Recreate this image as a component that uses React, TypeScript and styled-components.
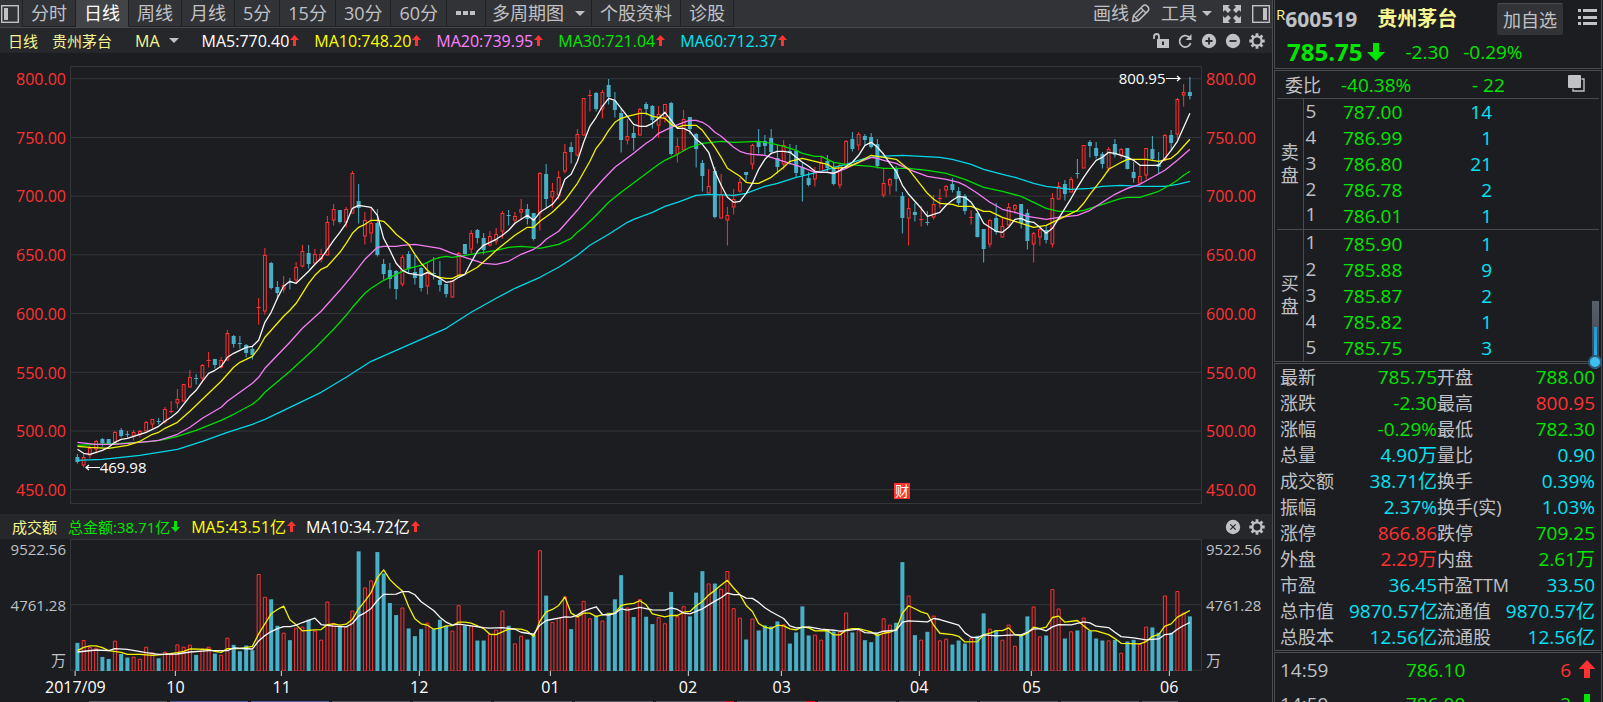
import React from "react";
import styled, { createGlobalStyle, css } from "styled-components";

const c = {
  bg: "#1c1d21",
  bar: "#26272b",
  line: "#35363a",
  frame: "#4a4b4f",
  text: "#c0c1c5",
  red: "#ff3232",
  green: "#00e600",
  cyan: "#00e5f5",
  yellow: "#ffff00",
  cream: "#f6f690",
  pink: "#ff80ff",
  teal: "#48b0c6",
};

const GlobalStyle = createGlobalStyle`
  * { box-sizing: border-box; }
  body { margin: 0; background: ${c.bg}; }
  button { font: inherit; color: inherit; background: none; border: 0; padding: 0; margin: 0; cursor: pointer; }
  table { border-collapse: collapse; }
  th, td { padding: 0; font-weight: 400; }
`;

/* ---------- market data ---------- */

// Per day: rising flag, body top, body bottom, high, low (price plot rows), turnover bar top (turnover plot rows)
type Day = [number, number, number, number, number, number];
const days: Day[] = [
  [0, 457, 462, 454, 463, 427], [1, 457, 465, 453, 467, 419], [1, 448, 455, 446, 458, 440], [1, 441, 449, 440, 453, 442],
  [0, 439, 443, 438, 446, 469], [0, 439, 444, 439, 444, 475], [1, 432, 442, 431, 443, 421], [0, 430, 436, 428, 437, 460],
  [0, 434, 435, 431, 437, 471], [1, 432, 436, 430, 440, 469], [1, 431, 434, 430, 437, 475], [1, 422, 431, 421, 431, 439],
  [1, 419, 424, 419, 428, 456], [0, 421, 422, 418, 424, 473], [1, 409, 422, 407, 423, 454], [1, 411, 411, 401, 413, 462],
  [1, 399, 403, 389, 408, 432], [1, 384, 401, 384, 401, 439], [1, 377, 387, 370, 387, 433], [0, 378, 379, 374, 384, 463],
  [1, 365, 378, 364, 382, 445], [1, 360, 360, 352, 367, 439], [0, 359, 365, 359, 368, 459], [1, 360, 367, 357, 368, 463],
  [1, 333, 360, 330, 360, 412], [0, 336, 344, 335, 347, 433], [0, 343, 344, 336, 348, 452], [0, 345, 353, 344, 357, 435],
  [0, 349, 355, 346, 359, 449], [1, 307, 307, 298, 324, 222], [1, 255, 311, 248, 314, 290], [0, 263, 288, 262, 289, 297],
  [0, 287, 293, 281, 299, 376], [1, 285, 289, 276, 292, 397], [0, 282, 283, 278, 289, 419], [1, 267, 280, 262, 283, 382],
  [1, 251, 266, 245, 267, 379], [0, 253, 264, 245, 268, 358], [1, 254, 263, 249, 265, 391], [1, 254, 259, 249, 262, 418],
  [1, 222, 255, 216, 255, 304], [1, 209, 220, 204, 225, 368], [0, 210, 222, 210, 223, 379], [1, 209, 222, 207, 227, 378],
  [1, 173, 213, 171, 213, 331], [0, 201, 208, 184, 223, 154], [1, 220, 236, 212, 244, 262], [1, 223, 233, 207, 242, 241],
  [0, 223, 255, 209, 256, 156], [0, 264, 274, 259, 279, 220], [0, 270, 279, 263, 288, 308], [0, 271, 289, 270, 299, 344],
  [1, 257, 284, 255, 286, 322], [0, 254, 269, 251, 273, 384], [0, 272, 278, 255, 284, 407], [0, 268, 288, 267, 291, 386],
  [1, 273, 286, 262, 294, 367], [0, 273, 274, 257, 279, 386], [0, 280, 285, 261, 291, 358], [0, 284, 294, 284, 297, 376],
  [1, 280, 297, 280, 297, 391], [1, 253, 275, 252, 275, 315], [0, 244, 254, 244, 254, 376], [1, 233, 249, 230, 253, 375],
  [0, 230, 238, 229, 243, 420], [0, 238, 250, 233, 254, 420], [1, 236, 245, 231, 246, 401], [1, 234, 241, 228, 244, 388],
  [1, 213, 231, 211, 238, 331], [0, 215, 216, 210, 225, 376], [1, 216, 220, 212, 224, 429], [1, 209, 212, 199, 219, 406],
  [0, 209, 219, 204, 224, 417], [0, 213, 239, 213, 240, 403], [1, 173, 213, 172, 230, 151], [0, 174, 199, 164, 207, 286],
  [1, 191, 197, 183, 207, 365], [1, 177, 195, 171, 199, 352], [1, 152, 171, 144, 173, 289], [0, 147, 152, 142, 163, 386],
  [1, 134, 155, 129, 156, 348], [1, 98, 135, 98, 135, 302], [1, 95, 95, 90, 111, 354], [0, 93, 109, 92, 111, 346],
  [1, 92, 109, 90, 118, 361], [0, 85, 97, 79, 104, 337], [0, 101, 110, 92, 117, 297], [0, 113, 140, 108, 152, 225],
  [1, 136, 140, 119, 144, 322], [0, 133, 138, 126, 150, 350], [1, 109, 135, 108, 135, 297], [0, 104, 109, 102, 115, 349],
  [0, 106, 120, 105, 128, 371], [1, 114, 125, 106, 137, 351], [1, 104, 117, 104, 122, 369], [0, 103, 154, 102, 155, 275],
  [1, 146, 154, 138, 162, 348], [1, 119, 150, 110, 151, 318], [0, 117, 129, 117, 134, 348], [0, 134, 149, 133, 167, 277],
  [0, 163, 176, 160, 191, 213], [1, 186, 193, 169, 193, 250], [0, 171, 217, 167, 218, 250], [1, 194, 218, 174, 218, 266],
  [1, 215, 220, 207, 245, 213], [1, 199, 207, 189, 214, 324], [1, 182, 191, 178, 192, 352], [0, 172, 175, 172, 181, 417],
  [1, 145, 164, 144, 169, 355], [0, 141, 147, 129, 153, 390], [0, 141, 146, 135, 155, 375], [0, 138, 152, 129, 154, 378],
  [0, 158, 167, 145, 173, 363], [1, 145, 164, 140, 169, 372], [0, 151, 153, 144, 164, 429], [0, 151, 173, 145, 177, 396],
  [0, 167, 175, 163, 201, 318], [0, 178, 185, 172, 186, 405], [1, 171, 179, 167, 186, 403], [1, 163, 172, 157, 172, 418],
  [0, 161, 168, 155, 171, 388], [0, 168, 184, 163, 185, 393], [1, 165, 185, 163, 188, 394], [1, 141, 165, 140, 165, 337],
  [0, 139, 149, 132, 151, 396], [1, 134, 145, 132, 150, 390], [0, 136, 140, 134, 145, 419], [0, 137, 147, 133, 148, 425],
  [0, 144, 166, 139, 168, 400], [1, 183, 195, 168, 197, 354], [1, 179, 185, 178, 194, 373], [0, 169, 179, 166, 191, 367],
  [0, 196, 218, 192, 233, 186], [1, 208, 218, 198, 245, 286], [0, 212, 215, 203, 221, 404], [1, 219, 219, 206, 226, 418],
  [0, 222, 223, 211, 225, 394], [1, 204, 217, 195, 219, 346], [1, 198, 198, 189, 208, 420], [1, 186, 190, 185, 197, 415],
  [0, 184, 190, 178, 192, 432], [0, 191, 203, 187, 205, 420], [0, 196, 211, 194, 214, 429], [1, 217, 217, 210, 224, 414],
  [0, 213, 237, 213, 237, 406], [0, 229, 249, 229, 262, 339], [1, 220, 244, 219, 247, 385], [0, 218, 232, 203, 234, 389],
  [1, 226, 237, 218, 237, 418], [1, 207, 225, 203, 225, 373], [1, 205, 209, 204, 213, 436], [0, 204, 223, 204, 228, 402],
  [0, 213, 241, 209, 249, 348], [1, 233, 244, 232, 262, 319], [1, 229, 237, 227, 245, 408], [0, 230, 240, 225, 243, 405],
  [1, 198, 244, 193, 247, 267], [1, 186, 199, 182, 199, 325], [0, 184, 194, 180, 200, 414], [1, 179, 192, 177, 192, 393],
  [0, 173, 174, 159, 178, 390], [1, 145, 168, 145, 168, 352], [0, 142, 146, 140, 157, 391], [0, 148, 156, 142, 158, 414],
  [0, 154, 164, 152, 168, 420], [1, 149, 168, 147, 171, 420], [0, 144, 155, 139, 157, 418], [1, 149, 155, 148, 158, 457],
  [0, 148, 169, 148, 169, 423], [0, 172, 178, 162, 182, 418], [1, 176, 183, 166, 183, 430], [1, 148, 175, 148, 179, 379],
  [0, 149, 159, 136, 160, 381], [0, 164, 167, 152, 173, 397], [1, 135, 159, 134, 161, 286], [0, 135, 143, 130, 150, 397],
  [1, 99, 134, 98, 139, 273], [1, 92, 95, 84, 106, 337], [0, 92, 96, 77, 99, 348],
];

// Moving averages as "day,row" pairs
const ma5 =
  "0,449 1,453 2,454 3,452 4,450 5,447 6,442 7,439 8,438 9,436 10,434 11,432 12,429 13,426 14,421 15,417 16,412 17,404 18,396 19,390 20,381 21,373 22,370 23,366 24,357 25,353 26,350 27,347 28,346 29,340 30,322 31,312 32,298 33,286 34,281 35,283 36,277 37,271 38,264 39,258 40,249 41,240 42,232 43,223 44,208 45,205 46,206 47,207 48,215 49,238 50,250 51,263 52,270 53,273 54,274 55,275 56,272 57,275 58,278 59,282 60,281 61,277 62,274 63,262 64,251 65,245 66,242 67,239 68,235 69,230 70,223 71,219 72,215 73,220 74,212 75,208 76,204 77,196 78,179 79,174 80,161 81,142 82,126 83,117 84,106 85,98 86,100 87,108 88,116 89,124 90,126 91,126 92,123 93,118 94,112 95,120 96,128 97,128 98,131 99,139 100,144 101,152 102,171 103,185 104,197 105,202 106,201 107,193 108,183 109,169 110,159 111,153 112,151 113,151 114,152 115,157 116,162 117,166 118,171 119,172 120,172 121,173 122,170 123,166 124,162 125,155 126,145 127,142 128,147 129,154 130,163 131,171 132,185 133,194 134,201 135,208 136,216 137,214 138,212 139,205 140,200 141,196 142,197 143,202 144,211 145,223 146,227 147,231 148,232 149,227 150,219 151,218 152,221 153,222 154,227 155,233 156,228 157,218 158,208 159,198 160,187 161,177 162,168 163,160 164,157 165,152 166,153 167,155 168,157 169,160 170,165 171,165 172,165 173,165 174,158 175,150 176,141 177,127 178,113";
const ma10 =
  "0,446 2,447 5,448 8,445 10,441 12,434 13,432 14,428 16,422 18,411 20,399 21,393 23,381 24,374 25,367 26,362 28,356 29,348 30,337 32,323 33,316 34,310 35,303 37,283 38,275 39,269 40,266 42,252 43,243 44,233 45,227 46,224 47,220 48,220 49,221 50,227 51,234 52,239 53,244 54,254 55,263 56,270 57,275 58,277 59,278 60,278 61,275 62,274 64,267 66,256 67,250 68,245 69,240 70,235 71,231 72,227 73,227 74,221 76,212 78,200 80,183 81,172 82,161 83,148 84,140 85,130 86,122 87,118 88,116 90,113 91,113 92,116 94,118 95,124 96,127 97,125 99,125 100,130 102,147 103,157 104,168 106,176 107,182 108,183 109,183 111,177 113,167 114,161 116,158 118,161 120,164 121,168 123,167 125,162 127,155 129,157 131,159 133,169 135,185 136,193 137,199 138,203 140,204 141,206 143,206 145,211 146,211 148,217 150,221 152,225 153,227 155,225 157,219 160,210 161,203 162,194 164,178 165,169 167,162 168,159 171,159 173,161 175,158 176,153 178,139";
const ma20 =
  "0,442 3,444 6,444 10,442 13,440 16,434 18,427 20,418 23,407 24,401 26,392 28,383 29,377 30,368 32,355 34,342 36,328 39,311 42,290 44,275 46,259 48,247 49,246 51,246 52,245 54,244 56,246 58,248 60,253 62,257 64,261 65,263 67,264 69,261 71,254 73,249 74,245 75,239 76,235 77,231 79,217 80,210 82,194 84,180 86,167 89,153 91,143 92,139 93,133 95,127 97,122 98,120 99,120 100,122 101,126 102,132 103,136 105,147 106,151 107,153 108,154 110,155 112,159 114,163 115,165 116,167 118,172 120,172 121,173 123,168 125,162 127,157 128,158 129,160 131,163 133,169 136,176 139,179 141,182 142,185 144,193 146,202 148,209 150,212 152,216 155,219 157,217 160,215 162,210 164,202 166,194 168,188 170,184 172,177 174,170 176,160 178,149";
const ma30 =
  "0,445 3,444 7,443 12,441 14,439 16,436 19,430 23,420 25,414 28,404 29,399 30,392 34,371 38,348 41,329 43,315 44,307 46,293 47,288 49,280 51,274 53,268 55,265 57,259 58,257 59,256 60,257 62,255 64,253 67,250 69,247 71,246 73,247 74,248 77,244 79,238 80,232 81,227 83,215 85,202 87,192 90,178 93,164 94,160 96,154 98,147 100,143 103,141 105,142 109,141 111,143 113,146 115,150 116,153 118,156 119,156 121,162 123,164 125,165 127,166 129,168 133,168 136,170 139,173 140,175 142,179 145,187 148,191 151,196 153,202 155,208 157,211 160,211 161,210 164,204 167,198 168,197 170,197 173,191 175,184 176,180 177,175 178,171";
const ma60 =
  "0,460 4,459 10,455 16,449 20,441 24,432 28,424 30,419 34,407 39,392 43,377 47,361 51,350 55,339 59,328 63,312 67,298 70,288 74,277 77,267 80,255 82,245 85,234 88,222 89,219 92,212 94,206 96,202 99,195 101,194 105,195 107,193 110,186 112,183 115,177 119,171 121,167 123,164 126,158 128,156 132,155 135,156 138,157 140,159 143,164 145,169 148,174 150,177 153,183 155,186 159,189 162,188 164,186 167,185 170,186 174,186 176,184 178,181";
const turnoverMa5 =
  "0,450 1,440 2,436 3,436 4,441 5,450 7,455 8,461 10,461 12,464 14,461 16,456 17,452 18,445 21,446 22,452 23,455 24,444 26,444 28,437 29,400 30,370 31,340 32,327 33,317 34,358 35,373 36,391 38,388 39,387 40,372 41,370 42,374 43,371 44,356 45,325 46,302 47,276 48,232 49,209 50,238 51,256 52,272 53,318 54,355 55,370 56,374 57,386 58,383 59,376 60,375 61,365 62,365 63,368 64,376 65,384 66,401 67,402 69,386 70,385 71,386 72,392 73,408 74,362 75,334 76,327 77,315 78,290 79,338 80,349 81,338 82,338 83,348 84,343 86,338 87,315 88,311 89,309 90,301 91,313 92,340 94,349 95,345 96,345 97,335 98,333 99,316 100,303 101,284 102,270 103,254 104,240 105,263 106,283 107,315 108,333 109,369 110,380 111,384 112,374 113,376 114,385 115,388 116,379 117,382 118,391 120,390 121,403 122,403 123,388 124,384 125,384 127,394 128,405 129,398 130,395 131,387 132,338 133,316 134,325 135,334 136,340 137,374 138,398 140,402 141,407 142,424 144,423 145,403 146,398 147,390 148,390 149,382 150,402 151,406 152,398 153,380 154,384 155,380 156,351 157,347 158,365 160,360 161,376 162,390 163,391 165,402 166,414 167,428 170,430 171,423 172,407 173,402 174,377 175,370 176,350 177,340 178,330";
const turnoverMa10 =
  "0,454 3,448 5,450 6,444 8,446 11,456 13,461 16,460 18,454 21,450 24,450 25,442 28,445 29,421 30,405 31,393 32,384 33,378 34,378 35,374 36,366 38,353 39,372 41,377 43,379 44,369 45,347 46,337 47,324 48,300 49,282 51,281 52,274 53,274 54,283 55,304 57,330 58,350 59,365 60,374 61,371 63,376 65,381 66,383 68,381 70,386 71,395 72,398 73,401 74,374 75,360 77,353 78,349 79,350 80,344 81,332 82,325 83,319 84,342 85,344 86,339 87,325 88,329 90,321 92,328 94,329 95,322 96,327 97,338 98,340 99,333 100,325 102,302 103,292 104,278 105,283 106,283 107,293 108,294 109,306 110,322 111,334 113,354 114,376 115,382 117,379 119,386 121,389 122,392 123,390 125,386 126,396 128,398 129,392 131,389 132,365 133,361 136,364 137,354 138,357 141,374 142,397 143,410 144,411 145,403 147,406 150,403 151,403 152,395 153,385 154,385 155,391 156,379 157,372 159,373 161,364 162,367 163,377 165,381 166,395 167,408 169,412 171,418 173,415 174,402 175,400 176,386 177,375 178,366";

const PLOT_W = 1132;
const dayX = (i: number) => 7.4 + 6.25 * i;
const toPoints = (series: string) =>
  series
    .split(" ")
    .map((pair) => {
      const [i, y] = pair.split(",").map(Number);
      return `${dayX(i)},${y + 0.3}`;
    })
    .join(" ");

const months = [
  ["2017/09", 0], ["10", 16], ["11", 33], ["12", 55], ["01", 76],
  ["02", 98], ["03", 113], ["04", 135], ["05", 153], ["06", 175],
] as const;

/* ---------- page frame ---------- */

const Page = styled.div`
  display: grid;
  grid-template-columns: minmax(0, 1fr) 330px;
  grid-template-rows: minmax(0, 1fr);
  height: 100vh;
  overflow: hidden;
  background: ${c.bg};
  color: ${c.text};
  font-family: "Open Sans", "Noto Sans CJK SC", sans-serif;
`;

const Main = styled.main`
  display: flex;
  flex-direction: column;
  min-width: 0;
  border-right: 1px solid ${c.frame};
`;

/* ---------- toolbar ---------- */

const Toolbar = styled.nav`
  display: flex;
  height: 28px;
  flex: none;
  background: #323337;
  border-bottom: 1px solid #47484c;
  font-size: 18px;
  line-height: 25px;
`;

const Tab = styled.button<{ $active?: boolean; $pad?: number }>`
  display: flex;
  align-items: center;
  justify-content: center;
  height: 27px;
  padding: 0 ${(p) => p.$pad ?? 8}px;
  border-right: 1px solid #1f2023;
  border-bottom: 1px solid #1f2023;
  white-space: nowrap;
  ${(p) =>
    p.$active &&
    css`
      color: #fff;
      background: #434448;
      border-bottom-color: #434448;
    `}
`;

const PanelToggle = styled.button`
  display: flex;
  align-items: center;
  width: 23px;
  padding-left: 1px;
  border-right: 1px solid #1f2023;
`;

const ToolGroup = styled.div`
  display: flex;
  align-items: center;
  margin-left: auto;
  padding-right: 2px;
  gap: 11px;
`;

const Tool = styled.button`
  display: flex;
  align-items: center;
  gap: 2px;
  white-space: nowrap;
`;

const Caret = styled.i<{ $gap: number }>`
  margin-left: ${(p) => p.$gap}px;
  border: 5px solid transparent;
  border-top-color: ${c.text};
  border-bottom: 0;
`;

/* ---------- indicator bars ---------- */

const Indicators = styled.div<{ $inset: number }>`
  display: flex;
  align-items: center;
  flex: none;
  height: 25px;
  padding: 0 7px 0 ${(p) => p.$inset}px;
  background: ${c.bar};
  font-size: 16px;
  line-height: 24px;
  white-space: nowrap;
`;

const Caption = styled.span<{ $gap: number }>`
  margin-right: ${(p) => p.$gap}px;
  color: ${c.cream};
  font-size: 15px;
`;

const MaSelect = styled.button`
  display: flex;
  align-items: center;
  margin-right: 23px;
  color: ${c.cream};
`;

const Reading = styled.span<{ $color: string; $small?: boolean; $gap?: number }>`
  display: flex;
  align-items: center;
  gap: 1px;
  margin-right: ${(p) => p.$gap ?? 15}px;
  color: ${(p) => p.$color};
  font-size: ${(p) => (p.$small ? 15 : 16)}px;
`;

const IconRow = styled.div`
  display: flex;
  gap: 8px;
  margin-left: auto;
`;

const IconButton = styled.button`
  display: flex;
  width: 16px;
  height: 16px;
`;

/* ---------- charts ---------- */

const PriceArea = styled.section`
  display: grid;
  grid-template-columns: 70px minmax(0, 1fr) 70px;
  flex: 1;
  min-height: 0;
`;

const TurnoverArea = styled(PriceArea)`
  flex: none;
  height: 132px;
`;

const Plot = styled.div<{ $top: number; $bottom: number }>`
  position: relative;
  margin: ${(p) => p.$top}px 0 ${(p) => p.$bottom}px;
  min-height: 0;
`;

const Canvas = styled.svg`
  display: block;
  position: absolute;
  inset: 0;
  width: 100%;
  height: 100%;
`;

const PriceScale = styled.div<{ $right?: boolean }>`
  display: flex;
  flex-direction: column;
  justify-content: space-between;
  padding: 16px 4px 14px;
  align-items: ${(p) => (p.$right ? "flex-start" : "flex-end")};
  color: ${c.red};
  font-size: 16px;
  line-height: 20px;
`;

const TurnoverScale = styled(PriceScale)`
  padding: 0 4px 1px;
  color: ${c.text};
  font-size: 15px;
`;

const Note = styled.span<{ $x: number; $y: number; $end?: boolean }>`
  position: absolute;
  top: ${(p) => p.$y}%;
  ${(p) => (p.$end ? "right" : "left")}: ${(p) => p.$x}%;
  display: flex;
  align-items: center;
  color: #fff;
  font-size: 15px;
  line-height: 20px;
`;

const Badge = styled.span`
  position: absolute;
  left: 72.8%;
  top: 95.3%;
  width: 16px;
  height: 16px;
  background: ${c.red};
  color: #fff;
  font-size: 14px;
  line-height: 15px;
  text-align: center;
`;

const TimeAxis = styled.div`
  flex: none;
  height: 30px;
  margin: 0 70px;
  position: relative;
`;

const Month = styled.span<{ $x: number }>`
  position: absolute;
  left: ${(p) => p.$x}%;
  display: flex;
  flex-direction: column;
  align-items: center;
  transform: translateX(-50%);
  color: #fff;
  font-size: 16px;
  line-height: 22px;

  &::before {
    content: "";
    width: 1px;
    height: 5px;
    background: #d8d8da;
  }
`;

const IndexStrip = styled.div`
  display: flex;
  flex: none;
  gap: 3px;
  height: 1px;
  padding: 0 94px 0 89px;
`;

const StripItem = styled.i<{ $tone: "grey" | "blue" | "hot" }>`
  flex: 78 0 0;
  background: ${(p) =>
    p.$tone === "blue"
      ? "#4c5fa0"
      : p.$tone === "hot"
      ? "linear-gradient(90deg, #5a5a64 88%, #e01010 88%)"
      : "#5a5a64"};

  &:last-child {
    flex-grow: 36;
  }
`;

/* ---------- quote panel ---------- */

const Side = styled.aside`
  display: flex;
  flex-direction: column;
  gap: 1px;
  padding: 0 1px;
  min-width: 0;
`;

const Box = styled.section`
  position: relative;
  flex: none;
  border: 1px solid ${c.frame};
`;

const Head = styled(Box)`
  height: 69px;
  border-top: 0;
`;

const HeadRow = styled.div`
  display: flex;
  align-items: center;
  height: 37px;
  padding: 0 3px 0 1px;
`;

const Flag = styled.sup`
  align-self: flex-start;
  color: ${c.cream};
  font-size: 15px;
  line-height: 29px;
`;

const Code = styled.strong`
  margin-right: 20px;
  font-size: 21px;
  line-height: 36px;
`;

const StockName = styled.h1`
  margin: 0;
  color: ${c.cream};
  font-size: 20px;
  line-height: 36px;
  font-weight: 700;
`;

const AddButton = styled.button`
  margin-left: auto;
  width: 66px;
  height: 32px;
  background: #323337;
  border-top: 1px solid #4a4b4f;
  border-radius: 2px;
  font-size: 18px;
`;

const ListButton = styled.button`
  display: flex;
  margin: 0 0 3px 15px;
`;

const LastRow = styled.div`
  display: flex;
  align-items: center;
  height: 30px;
  padding-left: 12px;
  color: ${c.green};
  font-size: 19px;
  line-height: 30px;

  strong {
    margin-right: 5px;
    font-size: 24px;
  }
  span {
    margin-left: 14px;
  }
  svg + span {
    margin-left: 20px;
  }
`;

const Ratio = styled.div`
  display: flex;
  align-items: center;
  height: 28px;
  margin: 0 2px;
  padding: 0 14px 0 8px;
  border-bottom: 1px solid ${c.frame};
  color: ${c.green};
  font-size: 19px;
  line-height: 24px;

  b {
    width: 56px;
    color: ${c.text};
    font-size: 18px;
    font-weight: 400;
    white-space: nowrap;
  }
  span:nth-child(2) {
    width: 131px;
  }
  button {
    margin-left: auto;
  }
`;

const Book = styled.table`
  width: calc(100% - 4px);
  margin: 0 2px;
  table-layout: fixed;
  font-size: 19px;
  line-height: 24px;

  tr {
    height: 26px;
  }
  tbody + tbody {
    border-top: 1px solid ${c.frame};
  }
  tbody + tbody tr:first-child {
    height: 28px;

    td {
      padding-top: 2px;
    }
  }
`;

const SideCell = styled.th`
  width: 26px;
  border-right: 1px solid ${c.frame};
  font-size: 18px;
  line-height: 23px;
`;

const Level = styled.th`
  width: 40px;
  padding: 0 0 3px 2px;
  line-height: 22px;
  text-align: left;
`;

const Price = styled.td`
  width: 80px;
  color: ${c.green};
`;

const Qty = styled.td`
  width: 69px;
  color: ${c.cyan};
  text-align: right;
`;

const DepthSlider = styled.input`
  position: absolute;
  right: -1px;
  bottom: -8px;
  z-index: 1;
  width: 14px;
  height: 68px;
  margin: 0;
  appearance: none;
  writing-mode: vertical-lr;
  background:
    linear-gradient(#2397d8, #2fb4ea) 50% 100% / 3px 42px no-repeat,
    linear-gradient(#5a6068, #36424e) 50% 0 / 7px 62px no-repeat;

  &::-webkit-slider-thumb {
    appearance: none;
    width: 14px;
    height: 14px;
    border: 2px solid #2d5a74;
    border-radius: 50%;
    background: #3cc0ee;
  }
`;

const Stats = styled.table`
  width: 100%;
  table-layout: fixed;
  line-height: 24px;
  white-space: nowrap;

  tr {
    height: 26px;
  }
  th {
    width: 74px;
    text-align: left;
    font-size: 18px;
  }
  th:first-child {
    padding-left: 5px;
  }
  th:nth-child(3) {
    width: 64px;
  }
`;

const Value = styled.td<{ $color: string }>`
  color: ${(p) => p.$color};
  font-size: 19px;
  text-align: right;

  &:nth-child(2) {
    width: 88px;
  }
  &:last-child {
    padding-right: 6px;
  }
`;

const Ticks = styled.table`
  width: 100%;
  table-layout: fixed;
  font-size: 19px;
  line-height: 34px;

  td {
    height: 34px;
  }
  td:first-child {
    width: 131px;
    padding-left: 5px;
  }
`;

const TickQty = styled.td<{ $color: string }>`
  color: ${(p) => p.$color};
  text-align: right;
  padding-right: 5px;

  svg {
    margin-left: 7px;
    vertical-align: -2px;
  }
`;

const TickPrice = styled.td`
  width: 80px;
  color: ${c.green};
`;

/* ---------- icons ---------- */

const Arrow = ({ down, color = c.red }: { down?: boolean; color?: string }) => (
  <svg width="9" height="13" viewBox="0 0 9 13" fill={color} aria-hidden="true">
    <path d={down ? "M3 1h3v6h3L4.500 12 0 7h3z" : "M3 12h3V6h3L4.500 1 0 6h3z"} />
  </svg>
);

const BigArrow = ({ down, color }: { down?: boolean; color: string }) => (
  <svg width="18" height="20" viewBox="0 0 18 20" fill={color} aria-hidden="true">
    <path d={down ? "M6 1h6v9h6l-9 9-9-9h6z" : "M6 19h6v-9h5.500L9 1 .5 10H6z"} />
  </svg>
);

const DockIcon = ({ right }: { right?: boolean }) => (
  <svg width="18" height="18" viewBox="0 0 18 18" aria-hidden="true">
    <rect x="0.700" y="0.700" width="16.600" height="16.600" fill="none" stroke={c.text} strokeWidth="1.400" />
    <rect x={right ? 11 : 3} y="3" width="4" height="12" fill={c.text} />
  </svg>
);

const DotsIcon = () => (
  <svg width="20" height="6" viewBox="0 0 20 6" fill={c.text} aria-hidden="true">
    <path d="M0 1h5v4H0zM7 1h5v4H7zM14 1h5v4h-5z" />
  </svg>
);

const PencilIcon = () => (
  <svg width="19" height="19" viewBox="0 0 19 19" fill="none" stroke={c.text} strokeWidth="1.500" strokeLinejoin="round" aria-hidden="true">
    <path d="M1.500 17.500l1-6L11.800 2c1.200-1.200 3-1.200 4.200 0l.9.900c1.200 1.200 1.200 3 0 4.200L7.500 16.500z" />
    <path d="M2.500 11.500l5 5M10 4l5 5M12 6.500L5.500 13" strokeWidth="1.300" />
  </svg>
);

const ExpandIcon = () => (
  <svg width="18" height="18" viewBox="0 0 18 18" fill={c.text} aria-hidden="true">
    <path d="M0 0h7L5 2l3 3-3 3-3-3-2 2zM18 0h-7l2 2-3 3 3 3 3-3 2 2zM0 18h7l-2-2 3-3-3-3-3 3-2-2zM18 18h-7l2-2-3-3 3-3 3 3 2-2z" />
  </svg>
);

const LockIcon = () => (
  <svg width="16" height="16" viewBox="0 0 16 16" aria-hidden="true">
    <path d="M1 6V3.500C1 2 2 1 3.500 1S6 2 6 3.500V7" fill="none" stroke={c.text} strokeWidth="1.800" />
    <path d="M4 6h12v9H4zM9 8.500V12h2V8.500z" fill={c.text} fillRule="evenodd" />
  </svg>
);

const ReloadIcon = () => (
  <svg width="16" height="16" viewBox="0 0 16 16" aria-hidden="true">
    <path d="M12 4A5.700 5.700 0 1 0 13.700 10" fill="none" stroke={c.text} strokeWidth="1.700" />
    <path d="M14.500 1v6H8.800z" fill={c.text} />
  </svg>
);

const DiscIcon = ({ d, thin }: { d: string; thin?: boolean }) => (
  <svg width="16" height="16" viewBox="0 0 16 16" aria-hidden="true">
    <circle cx="8" cy="8" r="7.200" fill={c.text} />
    <path d={d} fill="none" stroke={c.bar} strokeWidth={thin ? 1.2 : 1.8} />
  </svg>
);

const GearIcon = () => (
  <svg width="16" height="16" viewBox="0 0 16 16" fill="none" stroke={c.text} aria-hidden="true">
    <circle cx="8" cy="8" r="4.600" strokeWidth="2.200" />
    <path
      d="M8 .3v3M8 12.700v3M.3 8h3M12.700 8h3M2.600 2.600l2 2M11.400 11.400l2 2M2.600 13.400l2-2M11.400 4.600l2-2"
      strokeWidth="2.800"
    />
  </svg>
);

const ListIcon = () => (
  <svg width="20" height="17" viewBox="0 0 20 17" fill={c.text} aria-hidden="true">
    <path d="M0 0h3v3H0zM5 0h14v3H5zM0 7h3v3H0zM5 7h14v3H5zM0 13h3v3H0zM5 13h14v3H5z" />
  </svg>
);

const CopyIcon = () => (
  <svg width="17" height="17" viewBox="0 0 17 17" aria-hidden="true">
    <path d="M13.500 4H16v12H5v-2.500" fill="none" stroke={c.text} strokeWidth="1.400" />
    <rect width="13" height="13" rx="1" fill={c.text} />
  </svg>
);

const Pointer = ({ left }: { left?: boolean }) => (
  <svg width="15" height="7" viewBox="0 0 15 7" fill="none" stroke="#fff" strokeWidth="1.200" aria-hidden="true">
    <path d={left ? "M15 3.500H1M4 1L1 3.500 4 6" : "M0 3.500h14M11 1l3 2.500L11 6"} />
  </svg>
);

/* ---------- chart drawings ---------- */

const Line = ({ series, color }: { series: string; color: string }) => (
  <polyline
    points={toPoints(series)}
    fill="none"
    stroke={color}
    strokeWidth="1.300"
    strokeLinejoin="round"
    vectorEffect="non-scaling-stroke"
  />
);

const PriceChart = () => (
  <Canvas viewBox={`0 66 ${PLOT_W} 438`} preserveAspectRatio="none" role="img" aria-label="日线 K线图">
    <path
      d={prices.map((_, n) => `M0 ${78.7 + 58.71 * n}H${PLOT_W}`).join("")}
      stroke={c.line}
      vectorEffect="non-scaling-stroke"
    />
    <rect x="0.500" y="66.500" width={PLOT_W - 1} height="437" fill="none" stroke={c.line} vectorEffect="non-scaling-stroke" />
    {days.map(([up, top, bottom, high, low], i) => {
      const x = dayX(i);
      return up ? (
        <g key={i} stroke={c.red} fill="none">
          <path d={`M${x} ${high}V${top}M${x} ${bottom}V${low + 0.5}`} />
          {bottom - top > 1 ? (
            <rect x={x - 1.4} y={top + 0.5} width="2.800" height={bottom - top - 0.5} />
          ) : (
            <path d={`M${x - 2} ${top + 0.5}h4`} />
          )}
        </g>
      ) : (
        <g key={i} fill={c.teal}>
          <rect x={x - 0.5} y={high} width="1" height={low - high + 0.5} />
          <rect x={x - 2} y={top} width="4" height={bottom - top} />
        </g>
      );
    })}
    <Line series={ma60} color="#00d8ea" />
    <Line series={ma30} color="#00dc00" />
    <Line series={ma20} color="#f67cf6" />
    <Line series={ma10} color="#f2f200" />
    <Line series={ma5} color="#f8f8f8" />
  </Canvas>
);

const TurnoverChart = () => (
  <Canvas viewBox={`0 117 ${PLOT_W} 394`} preserveAspectRatio="none" role="img" aria-label="成交额">
    <path
      d={`M0 118.500H${PLOT_W}M0 313H${PLOT_W}M0 509H${PLOT_W}M.5 117V511M${PLOT_W - 0.5} 117V511`}
      stroke={c.line}
      vectorEffect="non-scaling-stroke"
    />
    {days.map(([up, , , , , top], i) =>
      up ? (
        <rect
          key={i}
          x={dayX(i) - 1.5}
          y={top + 1}
          width="3"
          height={510 - top}
          fill={c.bg}
          stroke={c.red}
          vectorEffect="non-scaling-stroke"
        />
      ) : (
        <rect key={i} x={dayX(i) - 2} y={top} width="4" height={512 - top} fill={c.teal} />
      )
    )}
    <Line series={turnoverMa5} color="#f2f200" />
    <Line series={turnoverMa10} color="#f8f8f8" />
  </Canvas>
);

/* ---------- content ---------- */

const periods = ["分时", "日线", "周线", "月线", "5分", "15分", "30分", "60分"];
const prices = ["800.00", "750.00", "700.00", "650.00", "600.00", "550.00", "500.00", "450.00"];

const averages = [
  ["MA5:770.40", "#ffffff"],
  ["MA10:748.20", c.yellow],
  ["MA20:739.95", c.pink],
  ["MA30:721.04", c.green],
  ["MA60:712.37", c.cyan],
];

const asks = [["5", "787.00", "14"], ["4", "786.99", "1"], ["3", "786.80", "21"], ["2", "786.78", "2"], ["1", "786.01", "1"]];
const bids = [["1", "785.90", "1"], ["2", "785.88", "9"], ["3", "785.87", "2"], ["4", "785.82", "1"], ["5", "785.75", "3"]];

const stats = [
  ["最新", "785.75", c.green, "开盘", "788.00", c.green],
  ["涨跌", "-2.30", c.green, "最高", "800.95", c.red],
  ["涨幅", "-0.29%", c.green, "最低", "782.30", c.green],
  ["总量", "4.90万", c.cyan, "量比", "0.90", c.cyan],
  ["成交额", "38.71亿", c.cyan, "换手", "0.39%", c.cyan],
  ["振幅", "2.37%", c.cyan, "换手(实)", "1.03%", c.cyan],
  ["涨停", "866.86", c.red, "跌停", "709.25", c.green],
  ["外盘", "2.29万", c.red, "内盘", "2.61万", c.green],
  ["市盈", "36.45", c.cyan, "市盈TTM", "33.50", c.cyan],
  ["总市值", "9870.57亿", c.cyan, "流通值", "9870.57亿", c.cyan],
  ["总股本", "12.56亿", c.cyan, "流通股", "12.56亿", c.cyan],
];

const strip = [
  "grey", "blue", "blue", "grey", "grey", "grey", "grey",
  "hot", "hot", "grey", "grey", "grey", "grey", "grey",
] as const;

const BookSide = ({ label, rows }: { label: [string, string]; rows: string[][] }) => (
  <tbody>
    {rows.map(([level, price, qty], i) => (
      <tr key={level}>
        {i === 0 && (
          <SideCell rowSpan={rows.length} scope="rowgroup">
            {label[0]}
            <br />
            {label[1]}
          </SideCell>
        )}
        <Level scope="row">{level}</Level>
        <Price>{price}</Price>
        <Qty>{qty}</Qty>
        <td />
      </tr>
    ))}
  </tbody>
);

export default function App() {
  return (
    <>
      <GlobalStyle />
      <Page>
        <Main>
          <Toolbar aria-label="周期">
            <PanelToggle aria-label="左侧栏">
              <DockIcon />
            </PanelToggle>
            {periods.map((name) => (
              <Tab key={name} $active={name === "日线"}>
                {name}
              </Tab>
            ))}
            <Tab aria-label="更多周期" $pad={9}>
              <DotsIcon />
            </Tab>
            <Tab $pad={6}>
              多周期图
              <Caret $gap={11} />
            </Tab>
            <Tab>个股资料</Tab>
            <Tab>诊股</Tab>
            <ToolGroup>
              <Tool>
                画线
                <PencilIcon />
              </Tool>
              <Tool>
                工具
                <Caret $gap={3} />
              </Tool>
              <Tool aria-label="全屏">
                <ExpandIcon />
              </Tool>
              <Tool aria-label="右侧栏">
                <DockIcon right />
              </Tool>
            </ToolGroup>
          </Toolbar>

          <Indicators $inset={8}>
            <Caption $gap={14}>日线</Caption>
            <Caption $gap={23}>贵州茅台</Caption>
            <MaSelect>
              MA
              <Caret $gap={9} />
            </MaSelect>
            {averages.map(([text, color]) => (
              <Reading key={text} $color={color}>
                {text}
                <Arrow />
              </Reading>
            ))}
            <IconRow>
              <IconButton aria-label="解锁">
                <LockIcon />
              </IconButton>
              <IconButton aria-label="刷新">
                <ReloadIcon />
              </IconButton>
              <IconButton aria-label="放大">
                <DiscIcon d="M4.500 8h7M8 4.500v7" />
              </IconButton>
              <IconButton aria-label="缩小">
                <DiscIcon d="M4.500 8h7" />
              </IconButton>
              <IconButton aria-label="设置">
                <GearIcon />
              </IconButton>
            </IconRow>
          </Indicators>

          <PriceArea>
            <PriceScale>
              {prices.map((p) => (
                <span key={p}>{p}</span>
              ))}
            </PriceScale>
            <Plot $top={13} $bottom={10}>
              <PriceChart />
              <Note $x={1.9} $y={0.5} $end>
                800.95
                <Pointer />
              </Note>
              <Note $x={1.3} $y={89.3}>
                <Pointer left />
                469.98
              </Note>
              <Badge>财</Badge>
            </Plot>
            <PriceScale $right>
              {prices.map((p) => (
                <span key={p}>{p}</span>
              ))}
            </PriceScale>
          </PriceArea>

          <Indicators $inset={12}>
            <Caption $gap={11}>成交额</Caption>
            <Reading $color={c.green} $small $gap={11}>
              总金额:38.71亿
              <Arrow down color={c.green} />
            </Reading>
            <Reading $color={c.yellow} $gap={10}>
              MA5:43.51亿
              <Arrow />
            </Reading>
            <Reading $color="#ffffff">
              MA10:34.72亿
              <Arrow />
            </Reading>
            <IconRow>
              <IconButton aria-label="关闭">
                <DiscIcon d="M5.300 5.300l5.400 5.400M10.700 5.300l-5.400 5.400" thin />
              </IconButton>
              <IconButton aria-label="设置">
                <GearIcon />
              </IconButton>
            </IconRow>
          </Indicators>

          <TurnoverArea>
            <TurnoverScale>
              <span>9522.56</span>
              <span>4761.28</span>
              <span>万</span>
            </TurnoverScale>
            <Plot $top={0} $bottom={0}>
              <TurnoverChart />
            </Plot>
            <TurnoverScale $right>
              <span>9522.56</span>
              <span>4761.28</span>
              <span>万</span>
            </TurnoverScale>
          </TurnoverArea>

          <TimeAxis>
            {months.map(([name, day]) => (
              <Month key={name} $x={((dayX(day) - 2) / PLOT_W) * 100}>
                {name}
              </Month>
            ))}
          </TimeAxis>
          <IndexStrip>
            {strip.map((tone, i) => (
              <StripItem key={i} $tone={tone} />
            ))}
          </IndexStrip>
        </Main>

        <Side>
          <Head>
            <HeadRow>
              <Flag>R</Flag>
              <Code>600519</Code>
              <StockName>贵州茅台</StockName>
              <AddButton>加自选</AddButton>
              <ListButton aria-label="列表">
                <ListIcon />
              </ListButton>
            </HeadRow>
            <LastRow>
              <strong>785.75</strong>
              <BigArrow down color={c.green} />
              <span>-2.30</span>
              <span>-0.29%</span>
            </LastRow>
          </Head>

          <Box>
            <Ratio>
              <b>委比</b>
              <span>-40.38%</span>
              <span>- 22</span>
              <button aria-label="弹出">
                <CopyIcon />
              </button>
            </Ratio>
            <Book>
              <BookSide label={["卖", "盘"]} rows={asks} />
              <BookSide label={["买", "盘"]} rows={bids} />
            </Book>
            <DepthSlider type="range" min={0} max={100} defaultValue={100} aria-label="盘口深度" />
          </Box>

          <Box>
            <Stats>
              <tbody>
                {stats.map(([a, av, ac, b, bv, bc]) => (
                  <tr key={a}>
                    <th scope="row">{a}</th>
                    <Value $color={ac}>{av}</Value>
                    <th scope="row">{b}</th>
                    <Value $color={bc}>{bv}</Value>
                  </tr>
                ))}
              </tbody>
            </Stats>
          </Box>

          <Box>
            <Ticks>
              <tbody>
                <tr>
                  <td>14:59</td>
                  <TickPrice>786.10</TickPrice>
                  <TickQty $color={c.red}>
                    6<BigArrow color={c.red} />
                  </TickQty>
                </tr>
                <tr>
                  <td>14:59</td>
                  <TickPrice>786.00</TickPrice>
                  <TickQty $color={c.green}>
                    2<BigArrow down color={c.green} />
                  </TickQty>
                </tr>
              </tbody>
            </Ticks>
          </Box>
        </Side>
      </Page>
    </>
  );
}
